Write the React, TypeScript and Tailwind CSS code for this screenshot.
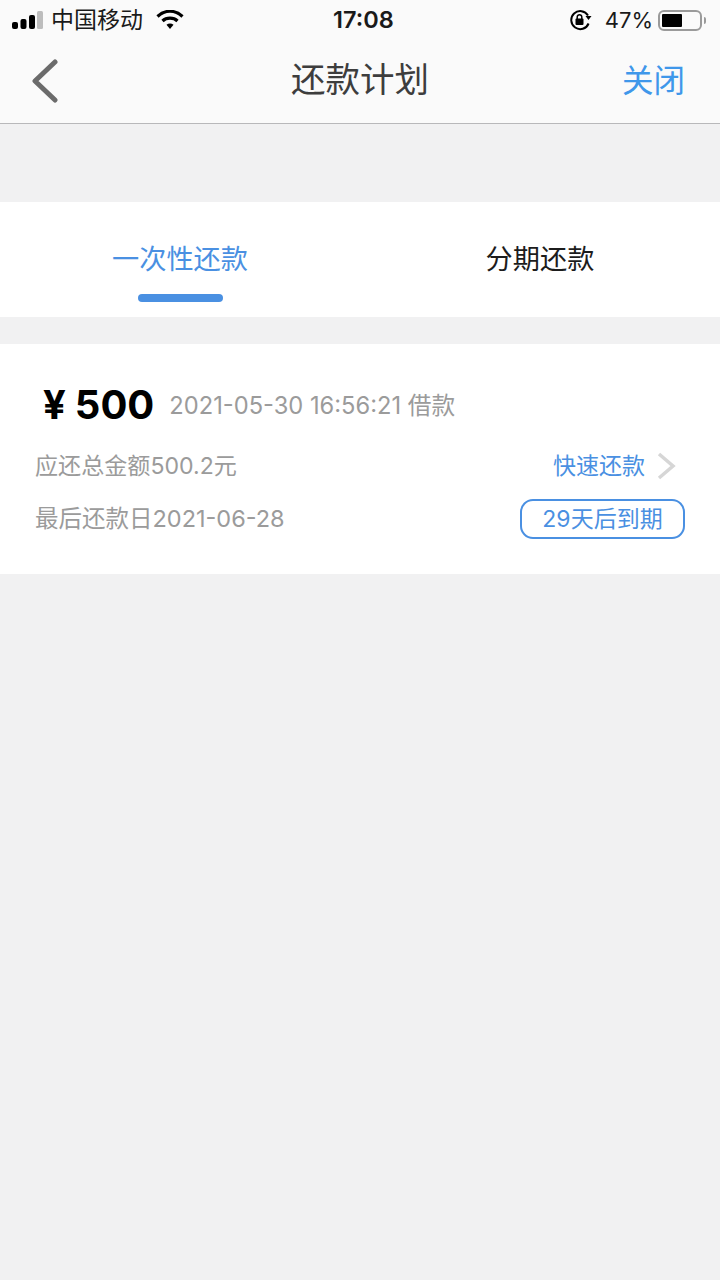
const font = { fontFamily: 'Inter, "Noto Sans CJK SC", sans-serif' };

function StatusBar() {
  return (
    <div className="relative flex h-[40px] items-center justify-between pl-3 pr-[14px] text-[#1a1a1a]">
      <div className="flex items-center">
        {/* signal bars */}
        <svg width="32" height="20" viewBox="0 0 32 20" className="mr-[7px]">
          <rect x="0" y="12" width="6" height="7" rx="2" fill="#000" />
          <rect x="8.5" y="9" width="6" height="10" rx="2" fill="#000" />
          <rect x="17" y="5" width="6" height="14" rx="2" fill="#000" />
          <rect x="25" y="1" width="6" height="18" rx="1.5" fill="#bdbdbd" />
        </svg>
        <span className="text-[23px] leading-none">中国移动</span>
        <svg width="28" height="20" viewBox="0 0 28 20" className="ml-[13px]">
          <path d="M1.5 6.500C9-.5 19-.5 26.500 6.500" fill="none" stroke="#000" strokeWidth="3.200" />
          <path d="M6.500 11C10.500 7.200 17.500 7.200 21.500 11" fill="none" stroke="#000" strokeWidth="3.200" />
          <path d="M10.500 14.800C12.600 13 15.400 13 17.500 14.800L14 19Z" fill="#000" />
        </svg>
      </div>
      <span className="absolute left-[333px] top-[6px] text-[23.500px] font-semibold leading-[28px]">17:08</span>
      <div className="flex items-center">
        <svg width="24" height="22" viewBox="0 0 24 22" className="mr-[12px]">
          <path d="M19 6.500A9 9 0 1 0 19.600 14.500" fill="none" stroke="#000" strokeWidth="2" />
          <path d="M16.500 7H22.500L19.500 11Z" fill="#000" />
          <rect x="6.500" y="9.500" width="8" height="6.500" rx="1" fill="#000" />
          <path d="M8.200 10V8a2.300 2.300 0 0 1 4.600 0v2" fill="none" stroke="#000" strokeWidth="1.500" />
        </svg>
        <span className="text-[22px] leading-none">47%</span>
        <div className="ml-[5px] flex h-[21px] w-[44px] items-center rounded-[6px] border-2 border-[#9a9a9a] p-[2px]">
          <div className="h-full w-[20px] rounded-[1px] bg-black" />
        </div>
        <div className="ml-[2px] h-[7px] w-[2px] rounded-r-full bg-[#9a9a9a]" />
      </div>
    </div>
  );
}

function NavBar() {
  return (
    <div className="relative flex h-[84px] items-center justify-between border-b border-[#b8b8ba] pb-[2px] pl-[31px] pr-[35px]">
      <svg width="28" height="44" viewBox="0 0 28 44">
        <path d="M24 3L4 22L24 41" fill="none" stroke="#6b6b6b" strokeWidth="5" strokeLinecap="round" strokeLinejoin="round" />
      </svg>
      <span className="absolute left-0 right-0 top-[18px] text-center text-[34.500px] leading-[44px] text-[#3d3d3d]">还款计划</span>
      <span className="text-[31.500px] leading-[44px] text-[#3f97ea]">关闭</span>
    </div>
  );
}

function Tabs() {
  return (
    <div className="mt-[78px] flex h-[115px] bg-white">
      <div className="relative flex flex-1 justify-center pt-[40px]">
        <span className="text-[27.200px] leading-[36px] text-[#4a90e2]">一次性还款</span>
        <div className="absolute bottom-[15px] left-[138px] h-[8px] w-[85px] rounded-full bg-[#4a90e2]" />
      </div>
      <div className="flex flex-1 justify-center pt-[40px]">
        <span className="text-[27.200px] leading-[36px] text-[#1c1c1c]">分期还款</span>
      </div>
    </div>
  );
}

function LoanCard() {
  return (
    <div className="mt-[27px] h-[230px] bg-white pl-[35px] pr-[35px] pt-[38px]">
      <div className="flex h-[46px] items-center">
        <span className="ml-[8px] text-[40px] font-bold leading-[46px] text-black">¥</span>
        <span className="ml-[9px] text-[40px] font-bold leading-[46px] text-black">500</span>
        <span className="ml-[15px] mt-[2px] text-[23.700px] leading-[30px] text-[#9b9b9b]">2021-05-30 16:56:21 借款</span>
      </div>
      <div className="mt-[23px] flex h-[30px] items-center justify-between">
        <span className="text-[23.100px] leading-[30px] text-[#9b9b9b]">应还总金额500.2元</span>
        <div className="flex items-center">
          <span className="text-[23px] leading-[30px] text-[#4a90e2]">快速还款</span>
          <svg width="20" height="30" viewBox="0 0 20 30" className="ml-[11px] mr-[9px]">
            <path d="M3 3L17 15L3 27" fill="none" stroke="#d6d6d6" strokeWidth="3.500" />
          </svg>
        </div>
      </div>
      <div className="mt-[18px] flex items-center justify-between">
        <span className="text-[23.500px] leading-[30px] text-[#9b9b9b]">最后还款日2021-06-28</span>
        <span className="flex h-[40px] w-[165px] items-center justify-center rounded-[13px] border-2 border-[#4a90e2] text-[23px] leading-none text-[#4a90e2]">29天后到期</span>
      </div>
    </div>
  );
}

export default function App() {
  return (
    <div style={font} className="h-[1280px] w-[720px] overflow-hidden bg-[#f1f1f2]">
      <div className="bg-[#fafafa]">
        <StatusBar />
        <NavBar />
      </div>
      <Tabs />
      <LoanCard />
    </div>
  );
}
